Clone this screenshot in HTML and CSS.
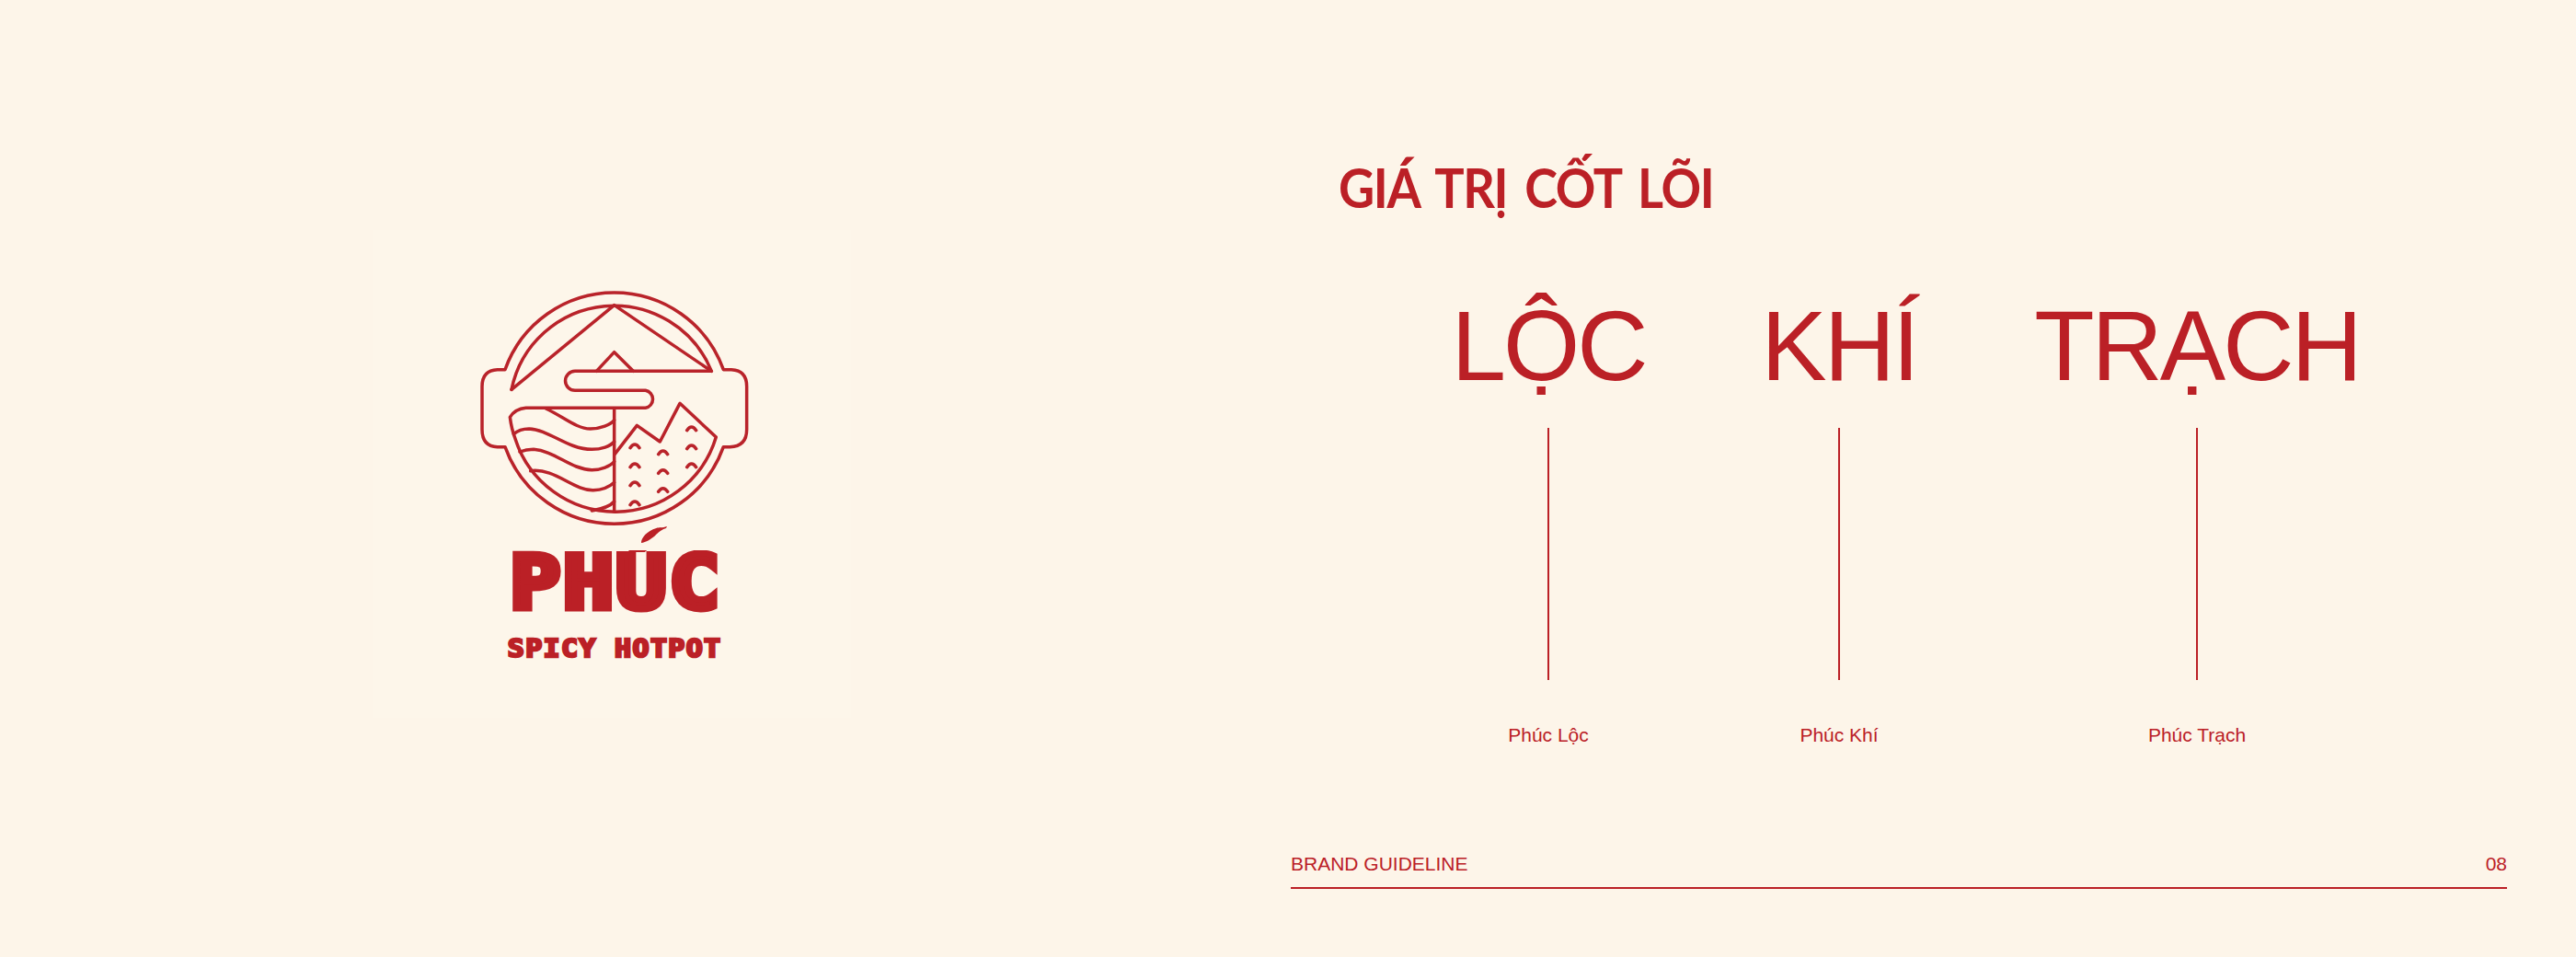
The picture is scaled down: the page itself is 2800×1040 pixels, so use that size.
FILE: index.html
```html
<!DOCTYPE html>
<html lang="vi">
<head>
<meta charset="utf-8">
<title>Brand Guideline 08</title>
<link rel="stylesheet" href="styles.css">
</head>
<body>
<main class="page">
  <section class="left">
    <div class="panel">
      <svg class="emblem" viewBox="0 0 1020 870" aria-hidden="true">
        <g class="art">
          <path d="M147 335A378 378 0 0 1 859 335H885Q935 337 935 390V530Q935 585 880 587H859A378 378 0 0 1 147 587H122Q72 585 72 530V390Q72 337 122 335Z"/>
          <path d="M168 400A342 342 0 0 1 820 340H375A31 31 0 0 0 375 403H605A29 29 0 0 1 605 460H215Q180 463 163 490Q168 530 180 560A343 343 0 0 0 835 555L717 445L652 570L577 517L505 610"/>
          <path d="M168 400L503 125L820 340M445 340L503 278L565 340M503 462V798"/>
          <path d="M280 462C340 490 380 528 425 528C460 528 490 515 503 500"/>
          <path d="M175 545C190 532 205 528 225 528C290 530 350 595 430 595C460 595 490 585 503 570"/>
          <path d="M195 603C210 597 225 595 240 595C310 600 360 660 430 662C460 662 490 650 503 635"/>
          <path d="M230 665C310 655 370 730 435 728C465 728 490 715 503 703"/>
          <path d="M430 795C460 790 490 780 503 765"/>
          <path d="M555 590Q570 568 585 590M555 653Q570 631 585 653M555 713Q570 691 585 713M555 776Q570 754 585 776M647 611Q662 589 677 611M647 673Q662 651 677 673M647 733Q662 711 677 733M740 533Q755 511 770 533M740 593Q755 571 770 593M740 653Q755 631 770 653"/>
        </g>
        <path class="chili" d="M591 900C590 885 610 860 640 852C650 848 660 852 675 846L672 852C660 855 652 862 640 872C625 888 605 898 591 900Z"/>
      </svg>
      <p class="wordmark">PHÚC</p>
      <p class="tagline">SPICY HOTPOT</p>
    </div>
  </section>
  <section class="right">
    <h1 class="title">GIÁ TRỊ CỐT LÕI</h1>
    <div class="values">
      <div class="value">
        <h2 class="big">LỘC</h2>
        <span class="stem"></span>
        <p class="label">Phúc Lộc</p>
      </div>
      <div class="value">
        <h2 class="big">KHÍ</h2>
        <span class="stem"></span>
        <p class="label">Phúc Khí</p>
      </div>
      <div class="value">
        <h2 class="big">TRẠCH</h2>
        <span class="stem"></span>
        <p class="label">Phúc Trạch</p>
      </div>
    </div>
    <footer class="foot">
      <span>BRAND GUIDELINE</span>
      <span>08</span>
    </footer>
  </section>
</main>
</body>
</html>
```
FILE: styles.css
```css
* { box-sizing: border-box; }
html, body { margin: 0; padding: 0; }
body {
  width: 2800px;
  height: 1040px;
  overflow: hidden;
  background: #fdf5e9;
  color: #bb2026;
  font-family: "Liberation Sans", Arial, sans-serif;
}
.page { display: flex; width: 2800px; height: 1040px; }
.left { width: 1403px; padding: 250px 0 0 405px; }
.panel {
  width: 520px;
  height: 530px;
  background: #fdf6ea;
  padding-top: 40px;
  display: flex;
  flex-direction: column;
  align-items: center;
}
.emblem { display: block; width: 340px; height: 290px; margin-left: 10px; flex: none; overflow: visible; }
.art path { fill: none; stroke: #b9232a; stroke-width: 10.5; stroke-linejoin: round; stroke-linecap: round; }
.chili { fill: #bb2026; }
.wordmark {
  margin: 12px 0 0 8px;
  height: 84px;
  line-height: 84px;
  font-family: "DejaVu Sans Mono", "Liberation Mono", monospace;
  font-weight: 700;
  font-size: 80px;
  letter-spacing: 2px;
  -webkit-text-stroke: 7px #bb2026;
  transform: scaleX(1.15);
  clip-path: inset(6px -20px -20px -20px);
}
.tagline {
  margin: 14px 0 0 6px;
  line-height: 30px;
  font-family: "DejaVu Sans Mono", "Liberation Mono", monospace;
  font-weight: 700;
  font-size: 26px;
  letter-spacing: 1.2px;
  -webkit-text-stroke: 2.5px #bb2026;
  transform: scaleX(1.15);
}
.right { width: 1322px; padding-top: 173px; display: flex; flex-direction: column; }
.title {
  margin: 0 0 0 52px;
  height: 60px;
  line-height: 60px;
  font-family: "Lato", "Liberation Sans", sans-serif;
  font-weight: 700;
  font-size: 60px;
  letter-spacing: -1.5px;
  word-spacing: 8px;
  white-space: nowrap;
  transform: scaleX(.9);
  transform-origin: left center;
}
.values {
  display: grid;
  grid-template-columns: 300px 332px 446px;
  margin: 77px 0 0 130px;
}
.value { display: flex; flex-direction: column; align-items: center; }
.big {
  margin: 4px 0 0;
  height: 125px;
  line-height: 125px;
  font-weight: 400;
  font-size: 107px;
  letter-spacing: -3px;
  white-space: nowrap;
}
.stem { display: block; width: 2px; height: 274px; margin-top: 26px; background: #bb2026; }
.label { margin: 47px 0 0; line-height: 26px; font-size: 21px; }
.foot {
  display: flex;
  justify-content: space-between;
  margin-top: 114px;
  padding-bottom: 12px;
  border-bottom: 2px solid #bb2026;
  font-size: 21px;
  line-height: 26px;
}
```
